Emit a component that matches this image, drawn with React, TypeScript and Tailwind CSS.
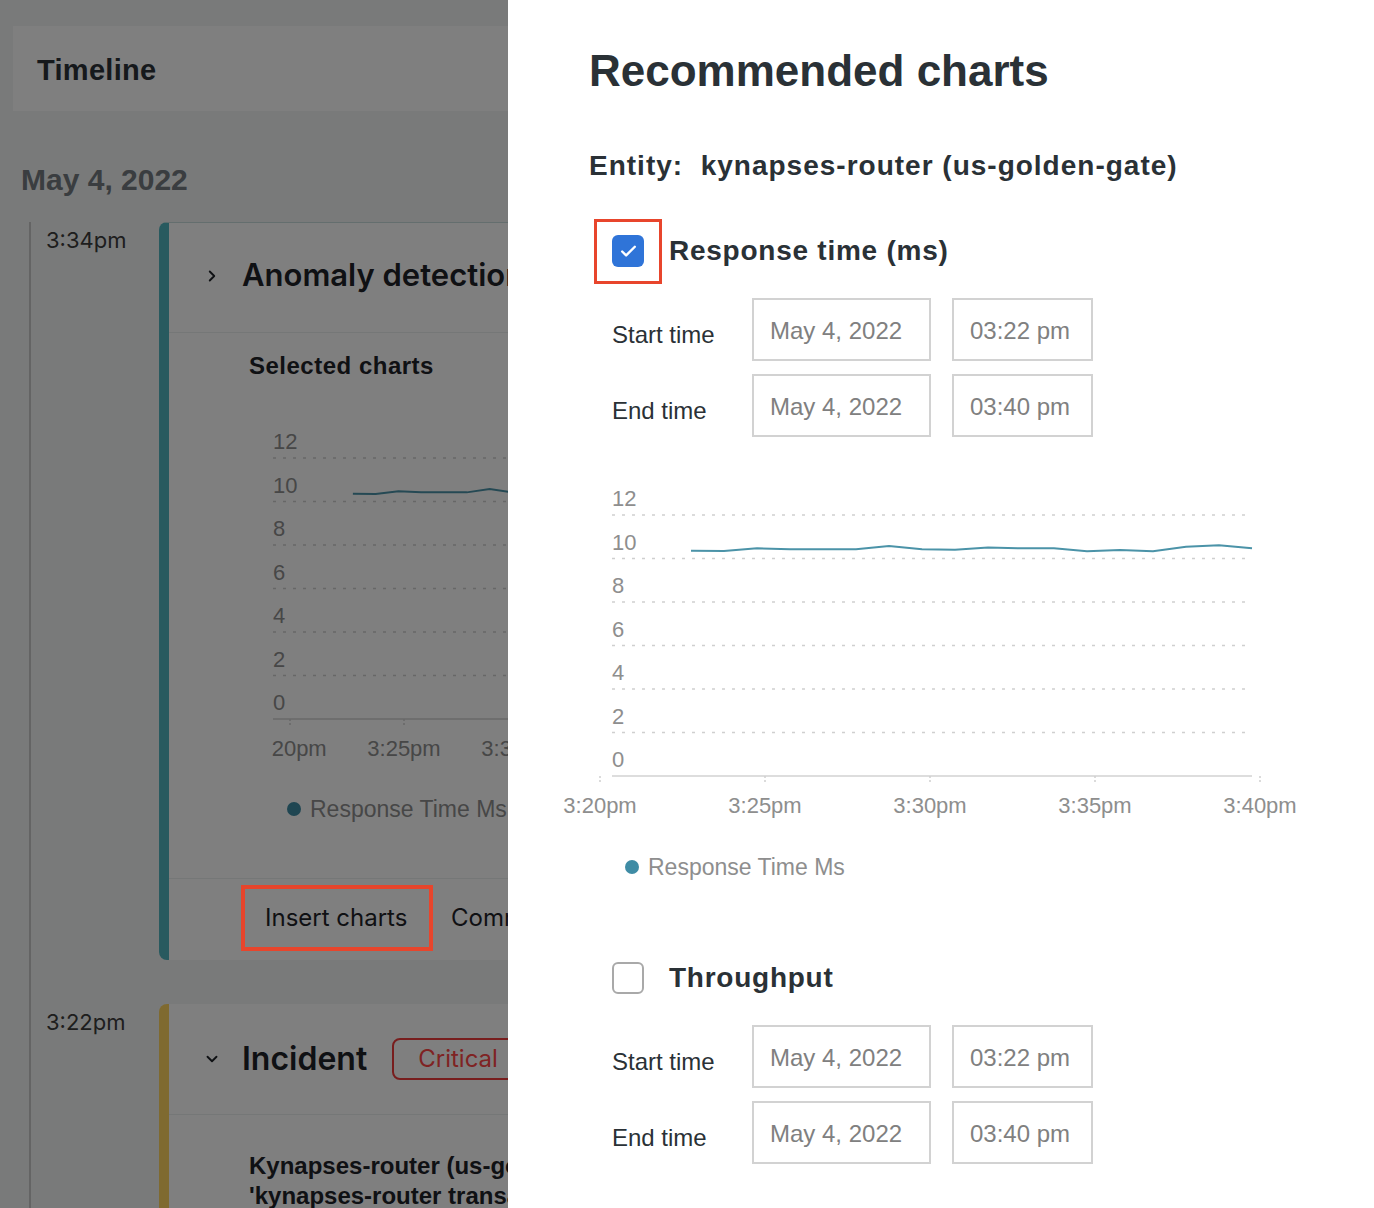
import React from "react"
import { Check, ChevronDown, ChevronRight } from "lucide-react"

const values = [
  10.36, 10.34, 10.47, 10.42, 10.42, 10.42, 10.57, 10.42, 10.4, 10.51, 10.47,
  10.47, 10.33, 10.39, 10.33, 10.54, 10.61, 10.47,
]

const gridLines = [35, 78.5, 122, 165.5, 209, 252.5]
const yLabels = ["12", "10", "8", "6", "4", "2"]
const xLabels = ["3:20pm", "3:25pm", "3:30pm", "3:35pm", "3:40pm"]
const AXIS = 296

type ChartProps = {
  width: number
  tick0: number
  step: number
  labelX: number
  gridEnd: number
  visible?: boolean
}

function LineChart({ width, tick0, step, labelX, gridEnd, visible }: ChartProps) {
  const scale = step / 165
  const points = values
    .map((v, i) => `${tick0 + (91 + 33 * i) * scale},${AXIS - v * 21.75}`)
    .join(" ")

  return (
    <svg
      width={width}
      height={345}
      className={visible ? "block overflow-visible" : "block"}
      style={{ fontFamily: '"Liberation Sans", Arial, sans-serif' }}
    >
      {gridLines.map((y, i) => (
        <g key={y}>
          <text x={labelX} y={y - 9} fontSize={22} fill="#8e8e8e">
            {yLabels[i]}
          </text>
          <line
            x1={labelX}
            x2={gridEnd}
            y1={y}
            y2={y}
            stroke="#cfcfcf"
            strokeWidth={1.5}
            strokeDasharray="3 7"
          />
        </g>
      ))}
      <text x={labelX} y={AXIS - 9} fontSize={22} fill="#8e8e8e">
        0
      </text>
      <line x1={labelX} x2={gridEnd} y1={AXIS} y2={AXIS} stroke="#dddddd" strokeWidth={2} />
      {xLabels.map((l, i) => (
        <g key={l}>
          <line
            x1={tick0 + i * step}
            x2={tick0 + i * step}
            y1={AXIS}
            y2={AXIS + 8}
            stroke="#cfcfcf"
            strokeWidth={1.5}
            strokeDasharray="2 2"
          />
          <text x={tick0 + i * step} y={AXIS + 37} fontSize={22} fill="#8e8e8e" textAnchor="middle">
            {l}
          </text>
        </g>
      ))}
      <polyline points={points} fill="none" stroke="#4b93a8" strokeWidth={2} />
    </svg>
  )
}

function Legend() {
  return (
    <div className="flex items-center gap-[9px] text-[23px] leading-[26px] text-[#8e8e8e]">
      <span className="w-[14px] h-[14px] rounded-full bg-[#3f8ca5]" />
      <span>Response Time Ms</span>
    </div>
  )
}

function TimeField({ label, date, time }: { label: string; date: string; time: string }) {
  return (
    <div className="flex items-center">
      <div className="w-[140px] pt-[10px] text-[24px] text-[#2a3136]">{label}</div>
      <div className="w-[179px] h-[63px] border-2 border-[#d2d2d2] flex items-center pl-[16px] pt-[2px] text-[24px] text-[#808080]">
        {date}
      </div>
      <div className="ml-[21px] w-[141px] h-[63px] border-2 border-[#d2d2d2] flex items-center pl-[16px] pt-[2px] text-[24px] text-[#808080]">
        {time}
      </div>
    </div>
  )
}

function ChartOption({ title, checked }: { title: string; checked: boolean }) {
  return (
    <div>
      <div className="flex items-center ml-[23px] h-[34px]">
        <div className="relative">
          {checked ? (
            <div className="w-[32px] h-[32px] rounded-[6px] bg-[#2f74d8] flex items-center justify-center">
              <Check size={19} strokeWidth={3} color="white" />
            </div>
          ) : (
            <div className="w-[32px] h-[32px] rounded-[6px] border-2 border-[#a9a9a9]" />
          )}
          {checked && (
            <span className="absolute left-[-18px] right-[-18px] top-[-16px] bottom-[-17px] border-[3px] border-[#e8452c]" />
          )}
        </div>
        <span className="ml-[25px] text-[28px] font-bold tracking-[0.75px] text-[#2a3136]">{title}</span>
      </div>
      <div className="ml-[23px] mt-[30px] flex flex-col gap-[13px]">
        <TimeField label="Start time" date="May 4, 2022" time="03:22 pm" />
        <TimeField label="End time" date="May 4, 2022" time="03:40 pm" />
      </div>
    </div>
  )
}

function TimelinePanel() {
  return (
    <div className="relative w-[508px] shrink-0 overflow-hidden bg-[#f2f5f4]">
      <div className="w-[900px]">
        <div className="ml-[13px] mt-[26px] h-[85px] bg-white flex items-center pl-[24px] pt-[4px]">
          <span className="text-[29px] font-bold tracking-[0.3px] text-[#2c3238]" style={{ fontFamily: '"Liberation Sans", Arial, sans-serif' }}>
            Timeline
          </span>
        </div>
        <div
          className="ml-[21px] mt-[51px] text-[30px] leading-[36px] font-bold text-[#747a80]"
          style={{ fontFamily: '"Liberation Sans", Arial, sans-serif' }}
        >
          May 4, 2022
        </div>

        <div className="ml-[29px] mt-[24px] border-l-2 border-[#c8c8c8] pb-[40px]" style={{ fontFamily: "Inter, sans-serif" }}>
          <div className="flex">
            <div className="w-[128px] shrink-0 pl-[15px] pt-[4px] text-[22px] leading-[28px] text-[#3c3c3c]">3:34pm</div>
            <div className="w-[700px] bg-white rounded-l-[8px] border-l-[10px] border-[#50b4be] border-t border-t-[#c9dcdc]">
              <div className="h-[110px] flex items-center pl-[34px] pb-[4px] border-b border-[#eaeeee]">
                <ChevronRight size={18} strokeWidth={2.5} color="#1f2328" />
                <span className="ml-[21px] text-[31px] font-semibold text-[#1f2328]">Anomaly detection</span>
              </div>
              <div
                className="pl-[80px] pt-[18px] text-[24px] leading-[30px] font-bold tracking-[0.5px] text-[#1f2328]"
                style={{ fontFamily: '"Liberation Sans", Arial, sans-serif' }}
              >
                Selected charts
              </div>
              <div className="ml-[103px] mt-[42px]">
                <LineChart width={400} tick0={18} step={114} labelX={1} gridEnd={700} />
              </div>
              <div className="ml-[118px] mt-[28px] mb-[56px]" style={{ fontFamily: '"Liberation Sans", Arial, sans-serif' }}>
                <Legend />
              </div>
              <div className="border-t border-[#eaeeee] pt-[6px] pb-[9px] pl-[72px] flex items-center gap-[18px] text-[24px] text-[#1f2328]">
                <div className="relative w-[192px] h-[66px] pl-[24px] flex items-center">
                  Insert charts
                  <span className="absolute inset-0 z-20 border-[4px] border-[#e8452c]" />
                </div>
                <div>Comment</div>
              </div>
            </div>
          </div>

          <div className="flex mt-[44px]">
            <div className="w-[128px] shrink-0 pl-[15px] pt-[4px] text-[22px] leading-[28px] text-[#3c3c3c]">3:22pm</div>
            <div className="w-[700px] h-[260px] bg-white rounded-l-[8px] border-l-[10px] border-[#fed460]">
              <div className="h-[111px] flex items-center pl-[34px] border-b border-[#eaeeee]">
                <ChevronDown size={18} strokeWidth={2.5} color="#1f2328" />
                <span className="ml-[21px] text-[32px] font-semibold text-[#1f2328]">Incident</span>
                <span className="ml-[25px] h-[42px] px-[24px] flex items-center rounded-[8px] border-2 border-[#f03c3c] text-[24px] text-[#ff4646]">
                  Critical
                </span>
              </div>
              <div
                className="pl-[80px] pt-[36px] text-[24px] leading-[30px] font-bold text-[#1f2328] whitespace-nowrap"
                style={{ fontFamily: '"Liberation Sans", Arial, sans-serif' }}
              >
                <div>Kynapses-router (us-golden-gate) anomaly</div>
                <div>'kynapses-router transaction time'</div>
              </div>
            </div>
          </div>
        </div>
      </div>
      <div className="absolute inset-0 z-10 bg-black/50" />
    </div>
  )
}

function RecommendedPanel() {
  return (
    <div className="flex-1 bg-white pl-[81px] pt-[45px]" style={{ fontFamily: '"Liberation Sans", Arial, sans-serif' }}>
      <h1 className="text-[44px] leading-[52px] font-bold text-[#2a3136]">Recommended charts</h1>
      <div className="mt-[52px] text-[28px] leading-[34px] font-bold text-[#2a3136] tracking-[1px]">
        Entity:&nbsp; kynapses-router (us-golden-gate)
      </div>
      <div className="mt-[51px]">
        <ChartOption title="Response time (ms)" checked />
      </div>
      <div className="mt-[43px]">
        <LineChart width={720} tick0={11} step={165} labelX={23} gridEnd={663} visible />
      </div>
      <div className="ml-[36px] mt-[29px]">
        <Legend />
      </div>
      <div className="mt-[81px]">
        <ChartOption title="Throughput" checked={false} />
      </div>
    </div>
  )
}

export default function App() {
  return (
    <div className="flex h-[1208px] w-[1374px] overflow-hidden">
      <TimelinePanel />
      <RecommendedPanel />
    </div>
  )
}
